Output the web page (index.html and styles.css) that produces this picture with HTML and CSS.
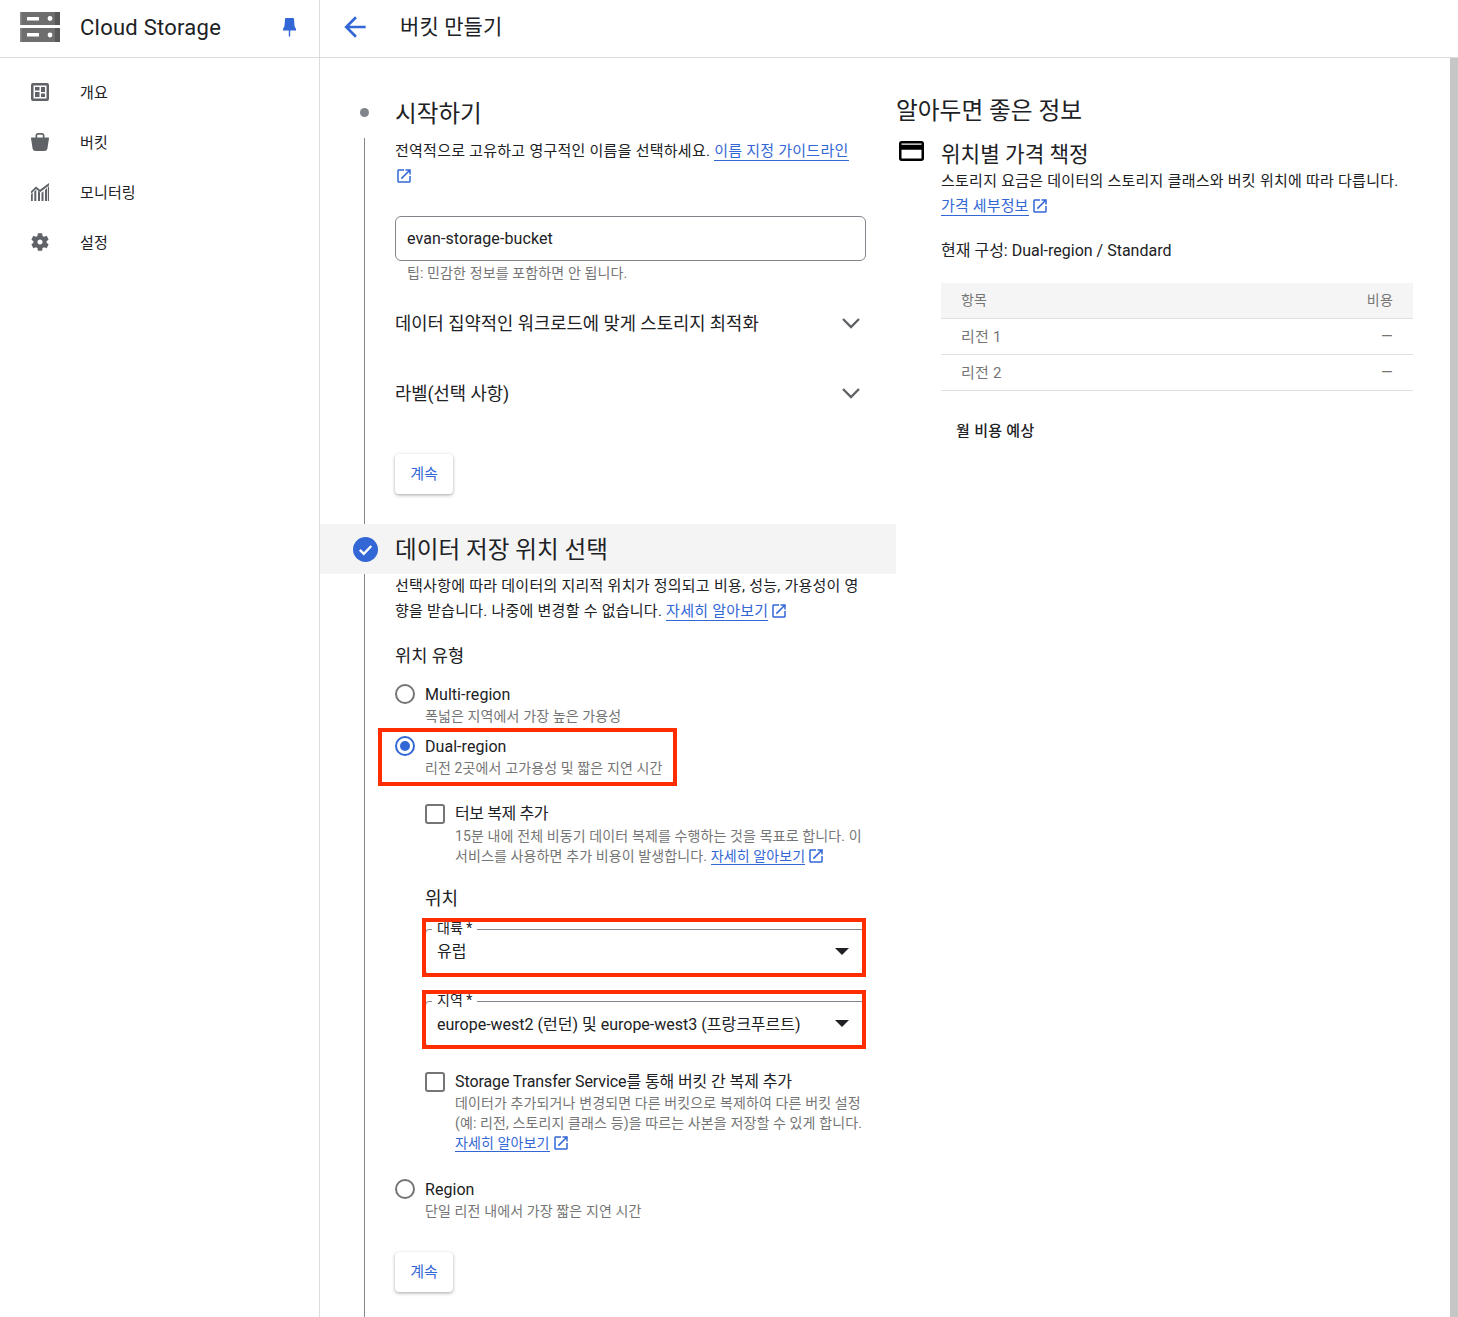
FILE: index.html
```html
<!DOCTYPE html>
<html lang="ko">
<head>
<meta charset="utf-8">
<title>버킷 만들기 - Cloud Storage</title>
<link rel="stylesheet" href="styles.css">
</head>
<body>
<div class="app">
  <header class="topbar">
    <div class="brand">
      <svg class="logo" viewBox="0 0 40 30" width="40" height="30">
        <path fill="#6e6e6e" d="M0 0h40v13H0zM0 16h40v14H0z"/>
        <path fill="#8a8a8a" d="M0 0h1.500v13H0zM0 16h1.500v14H0z"/>
        <path fill="#585858" d="M35 0h5v13h-5zM35 16h5v14h-5z"/>
        <path fill="#fff" d="M7 5h12v3.500H7zM7 21h12v3.500H7z"/>
        <circle fill="#fff" cx="30" cy="6.500" r="2.400"/>
        <circle fill="#fff" cx="30" cy="23" r="2.400"/>
      </svg>
      <span class="brand-name">Cloud Storage</span>
      <svg class="pin" viewBox="0 0 13 19" width="13" height="19"><path fill="#3367d6" d="M3 0h7q1 0 1 1l.5 7 1.500 3v1.500H7.200V18l-.7 1-.7-1v-5.500H0V11l1.500-3L2 1q0-1 1-1z"/></svg>
    </div>
    <div class="page-title">
      <svg class="back" viewBox="0 0 24 24" width="32" height="32"><path fill="#3367d6" d="M20 11H7.830l5.590-5.590L12 4l-8 8 8 8 1.410-1.410L7.830 13H20v-2z"/></svg>
      <h1>버킷 만들기</h1>
    </div>
  </header>

  <div class="content">
    <nav class="sidebar">
      <a class="nav-item">
        <svg viewBox="0 0 18 18" width="18" height="18"><path fill="#5f6368" d="M2 0h14a2 2 0 0 1 2 2v14a2 2 0 0 1-2 2H2a2 2 0 0 1-2-2V2a2 2 0 0 1 2-2z"/><path fill="#fff" d="M2.500 2.500h13v13h-13z"/><path fill="#5f6368" d="M4 4h4.500v3.500H4zM4 9h4.500v5H4zM10 4h4v5h-4zM10 10.500h4V14h-4z"/></svg>
        <span>개요</span>
      </a>
      <a class="nav-item">
        <svg viewBox="0 0 18 18" width="18" height="18"><path fill="#5f6368" fill-rule="evenodd" d="M4.500 4.500V2.500C4.500 1.100 5.600 0 7 0h4c1.400 0 2.500 1.100 2.500 2.500v2h3.800c.5 0 .8.300.7.800L16.500 15c-.2 1.700-1.300 3-3 3h-9c-1.700 0-2.800-1.300-3-3L0 5.300c-.1-.5.2-.8.700-.8zm1.700 0h5.600V2.700c0-.6-.4-1-1-1H7.200c-.6 0-1 .4-1 1z"/></svg>
        <span>버킷</span>
      </a>
      <a class="nav-item">
        <svg viewBox="0 0 18 18" width="18" height="18"><path fill="#5f6368" d="M0 11.500l1.800-1.700V18H0zM3.300 8.500l2-1.800V18h-2zM7 8l2 1.500V18H7zM10.500 9.800l2-1.600V18h-2zM14 7l2-2v13h-2zM16.800 4.300L18 3.200V18h-1.200zM0 8.300L5 3.500l4 3.200L18 0v2.500L9 9.200 5 6l-5 4.700z"/></svg>
        <span>모니터링</span>
      </a>
      <a class="nav-item">
        <svg viewBox="0 0 24 24" width="22" height="22" class="gear"><path fill="#5f6368" d="M19.140 12.940c.04-.3.060-.61.060-.94 0-.32-.02-.64-.07-.94l2.030-1.580c.18-.14.230-.41.120-.61l-1.920-3.320c-.12-.22-.37-.29-.59-.22l-2.390.96c-.5-.38-1.030-.7-1.620-.94l-.36-2.540c-.04-.24-.24-.41-.48-.41h-3.840c-.24 0-.43.170-.47.410l-.36 2.540c-.59.240-1.130.570-1.620.94l-2.390-.96c-.22-.08-.47 0-.59.220L2.740 8.870c-.12.210-.08.470.12.610l2.030 1.580c-.05.3-.09.630-.09.940s.02.640.07.940l-2.030 1.580c-.18.140-.23.410-.12.610l1.920 3.320c.12.220.37.290.59.220l2.390-.96c.5.380 1.030.7 1.620.94l.36 2.540c.05.240.24.410.48.410h3.840c.24 0 .44-.17.470-.41l.36-2.540c.59-.24 1.130-.56 1.620-.94l2.390.96c.22.080.47 0 .59-.22l1.920-3.320c.12-.22.070-.47-.12-.61l-2.010-1.580zM12 14.800c-1.540 0-2.800-1.260-2.800-2.800s1.260-2.800 2.800-2.800 2.800 1.260 2.800 2.800-1.260 2.800-2.800 2.800z"/></svg>
        <span>설정</span>
      </a>
    </nav>

    <main class="main">
      <div class="steps">
        <section class="step step-one">
          <div class="step-head">
            <span class="marker"><i class="dot"></i></span>
            <h2>시작하기</h2>
          </div>
          <div class="step-body first-body">
            <p class="para">전역적으로 고유하고 영구적인 이름을 선택하세요. <a class="link">이름 지정 가이드라인</a><br>
              <svg class="ext" viewBox="0 0 24 24"><path fill="#3367d6" d="M19 19H5V5h7V3H5c-1.110 0-2 .9-2 2v14c0 1.100.89 2 2 2h14c1.100 0 2-.9 2-2v-7h-2v7zM14 3v2h3.590l-9.830 9.830 1.410 1.410L19 6.410V10h2V3h-7z"/></svg>
            </p>
            <div class="text-input">evan-storage-bucket</div>
            <div class="hint">팁: 민감한 정보를 포함하면 안 됩니다.</div>
            <div class="expander first-exp">
              <span>데이터 집약적인 워크로드에 맞게 스토리지 최적화</span>
              <svg class="chev" viewBox="0 0 18 12" width="18" height="12"><path fill="none" stroke="#5f6368" stroke-width="2.400" d="M1 2l8 8 8-8"/></svg>
            </div>
            <div class="expander">
              <span>라벨(선택 사항)</span>
              <svg class="chev" viewBox="0 0 18 12" width="18" height="12"><path fill="none" stroke="#5f6368" stroke-width="2.400" d="M1 2l8 8 8-8"/></svg>
            </div>
            <button class="btn btn-one">계속</button>
          </div>
        </section>

        <section class="step">
          <div class="step-head active">
            <span class="marker">
              <svg viewBox="0 0 25 25" width="25" height="25"><circle cx="12.500" cy="12.500" r="12.500" fill="#3367d6"/><path fill="none" stroke="#fff" stroke-width="2.400" d="M6.800 12.800l4 4 7.500-7.800"/></svg>
            </span>
            <h2>데이터 저장 위치 선택</h2>
          </div>
          <div class="step-body second-body">
            <p class="para">선택사항에 따라 데이터의 지리적 위치가 정의되고 비용, 성능, 가용성이 영향을 받습니다. 나중에 변경할 수 없습니다. <a class="link">자세히 알아보기</a><svg class="ext" viewBox="0 0 24 24"><path fill="#3367d6" d="M19 19H5V5h7V3H5c-1.110 0-2 .9-2 2v14c0 1.100.89 2 2 2h14c1.100 0 2-.9 2-2v-7h-2v7zM14 3v2h3.590l-9.830 9.830 1.410 1.410L19 6.410V10h2V3h-7z"/></svg></p>
            <h3 class="sub-title type-title">위치 유형</h3>

            <div class="radio-row multi">
              <span class="radio"></span>
              <div>
                <div class="opt-title">Multi-region</div>
                <div class="opt-desc">폭넓은 지역에서 가장 높은 가용성</div>
              </div>
            </div>

            <div class="radio-row dual marked">
              <span class="radio on"></span>
              <div>
                <div class="opt-title">Dual-region</div>
                <div class="opt-desc">리전 2곳에서 고가용성 및 짧은 지연 시간</div>
              </div>
              <i class="red red-dual"></i>
            </div>

            <div class="nested">
              <div class="check-row turbo">
                <span class="checkbox"></span>
                <div>
                  <div class="opt-title tight">터보 복제 추가</div>
                  <div class="opt-desc lines">15분 내에 전체 비동기 데이터 복제를 수행하는 것을 목표로 합니다. 이 서비스를 사용하면 추가 비용이 발생합니다. <a class="link">자세히 알아보기</a><svg class="ext" viewBox="0 0 24 24"><path fill="#3367d6" d="M19 19H5V5h7V3H5c-1.110 0-2 .9-2 2v14c0 1.100.89 2 2 2h14c1.100 0 2-.9 2-2v-7h-2v7zM14 3v2h3.590l-9.830 9.830 1.410 1.410L19 6.410V10h2V3h-7z"/></svg></div>
                </div>
              </div>

              <h3 class="sub-title loc-title">위치</h3>

              <div class="select-wrap marked">
                <div class="select">
                  <span class="float-label">대륙 *</span>
                  <span class="select-value raised">유럽</span>
                  <i class="caret"></i>
                </div>
                <i class="red red-select"></i>
              </div>

              <div class="select-wrap second marked">
                <div class="select">
                  <span class="float-label">지역 *</span>
                  <span class="select-value">europe-west2 (런던) 및 europe-west3 (프랑크푸르트)</span>
                  <i class="caret"></i>
                </div>
                <i class="red red-select"></i>
              </div>

              <div class="check-row transfer">
                <span class="checkbox"></span>
                <div>
                  <div class="opt-title tight-small">Storage Transfer Service를 통해 버킷 간 복제 추가</div>
                  <div class="opt-desc lines">데이터가 추가되거나 변경되면 다른 버킷으로 복제하여 다른 버킷 설정(예: 리전, 스토리지 클래스 등)을 따르는 사본을 저장할 수 있게 합니다.<br><a class="link">자세히 알아보기</a><svg class="ext" viewBox="0 0 24 24"><path fill="#3367d6" d="M19 19H5V5h7V3H5c-1.110 0-2 .9-2 2v14c0 1.100.89 2 2 2h14c1.100 0 2-.9 2-2v-7h-2v7zM14 3v2h3.590l-9.830 9.830 1.410 1.410L19 6.410V10h2V3h-7z"/></svg></div>
                </div>
              </div>
            </div>

            <div class="radio-row region">
              <span class="radio"></span>
              <div>
                <div class="opt-title">Region</div>
                <div class="opt-desc">단일 리전 내에서 가장 짧은 지연 시간</div>
              </div>
            </div>

            <button class="btn btn-two">계속</button>
          </div>
        </section>
      </div>

      <aside class="info">
        <h2 class="info-title">알아두면 좋은 정보</h2>
        <div class="info-head">
          <svg viewBox="2 4 20 16" width="25" height="20"><path fill="#000" fill-rule="evenodd" d="M20 4H4c-1.110 0-1.990.89-1.990 2L2 18c0 1.110.89 2 2 2h16c1.110 0 2-.89 2-2V6c0-1.110-.89-2-2-2zm0 14H4v-7h16v7zm0-11H4V6h16v1z"/></svg>
          <h3>위치별 가격 책정</h3>
        </div>
        <div class="info-body">
          <p class="info-desc">스토리지 요금은 데이터의 스토리지 클래스와 버킷 위치에 따라 다릅니다.</p>
          <p class="info-link"><a class="link">가격 세부정보</a><svg class="ext" viewBox="0 0 24 24"><path fill="#3367d6" d="M19 19H5V5h7V3H5c-1.110 0-2 .9-2 2v14c0 1.100.89 2 2 2h14c1.100 0 2-.9 2-2v-7h-2v7zM14 3v2h3.590l-9.830 9.830 1.410 1.410L19 6.410V10h2V3h-7z"/></svg></p>
          <p class="config">현재 구성: Dual-region / Standard</p>
          <div class="table">
            <div class="row header"><span>항목</span><span>비용</span></div>
            <div class="row"><span>리전 1</span><span>—</span></div>
            <div class="row"><span>리전 2</span><span>—</span></div>
          </div>
          <p class="estimate">월 비용 예상</p>
        </div>
      </aside>
      <div class="scrollbar"></div>
    </main>
  </div>
</div>
</body>
</html>
```

FILE: styles.css
```css
* { box-sizing: border-box; }
html, body { margin: 0; padding: 0; height: 100%; }
body {
  font-family: Roboto, "Noto Sans CJK KR", sans-serif;
  color: #202124;
  background: #fff;
  overflow: hidden;
  font-size: 15px;
}
h1, h2, h3, p { margin: 0; font-weight: 400; }
.app { width: 1458px; height: 1317px; display: flex; flex-direction: column; overflow: hidden; }

.topbar { height: 58px; display: flex; border-bottom: 1px solid #dadce0; flex: none; }
.brand { width: 320px; border-right: 1px solid #dadce0; display: flex; align-items: center; padding: 0 23px 3px 20px; }
.logo { flex: none; }
.brand-name { margin-left: 20px; font-size: 22px; color: #202124; flex: 1; letter-spacing: .25px; }
.pin { flex: none; }
.page-title { display: flex; align-items: center; padding: 0 0 4px 19px; }
.page-title h1 { font-size: 21px; margin: -3px 0 0 29px; color: #202124; letter-spacing: .1px; }

.content { flex: 1; display: flex; min-height: 0; }
.sidebar { width: 320px; border-right: 1px solid #dadce0; padding-top: 9px; flex: none; }
.nav-item { height: 50px; display: flex; align-items: center; padding-left: 31px; font-size: 15px; letter-spacing: .15px; }
.nav-item svg { flex: none; margin-right: 31px; }
.nav-item svg.gear { margin: 0 29px 0 -2px; }
.nav-item span { color: #202124; margin-top: -2px; }

.main { flex: 1; display: flex; position: relative; min-width: 0; }
.steps { width: 576px; flex: none; padding-top: 30px; }
.step-head { display: flex; align-items: center; height: 50px; }
.marker { width: 30px; margin-left: 30px; margin-right: 15px; display: flex; justify-content: center; flex: none; }
.dot { width: 9px; height: 9px; border-radius: 50%; background: #80868b; display: block; margin: -1px 1px 0 0; }
.step-head h2 { font-size: 23.600px; color: #202124; line-height: 30px; padding-top: 2px; }
.step-head.active { background: #f4f4f4; }
.step-body { margin-left: 44px; border-left: 1px solid #80868b; padding-left: 30px; }
.first-body { height: 386px; padding-top: 1px; }
.para { font-size: 15px; line-height: 25px; width: 470px; letter-spacing: .25px; }
.link { color: #3367d6; border-bottom: 1px solid #3367d6; }
.ext { width: 18px; height: 18px; vertical-align: -4px; margin-left: 2px; }
.para > .ext:first-of-type { margin-left: 0; }
.second-body .para .ext { margin-left: 2px; }
.text-input {
  margin-top: 27px; width: 471px; height: 45px; border: 1px solid #80868b; border-radius: 6px;
  padding: 0 11px; display: flex; align-items: center; font-size: 16px; color: #202124; letter-spacing: .1px;
}
.hint { font-size: 14px; color: #757575; line-height: 20px; padding-left: 12px; margin-top: 2px; letter-spacing: .12px; }
.expander { width: 471px; height: 70px; display: flex; align-items: center; justify-content: space-between; font-size: 17.700px; padding-right: 6px; }
.expander span { margin-top: -2px; }
.first-exp { margin-top: 5px; }
.btn {
  display: block; width: 58px; height: 40px; background: #fff; border: 0; border-radius: 4px;
  color: #3367d6; font: inherit; font-size: 15px; box-shadow: 0 1px 3px rgba(60,64,67,.35), 0 2px 4px rgba(60,64,67,.12); padding: 0 0 4px;
}
.btn-one { margin-top: 26px; }

.second-body { height: 900px; }
.sub-title { font-size: 17.600px; line-height: 24px; color: #202124; }
.type-title { margin-top: 20px; }
.radio-row { display: flex; gap: 10px; position: relative; }
.radio { flex: none; width: 20px; height: 20px; border-radius: 50%; border: 2px solid #757575; margin-top: 9px; background: #fff; position: relative; }
.radio.on { border-color: #3367d6; }
.radio.on::after { content: ""; position: absolute; inset: 3px; border-radius: 50%; background: #3367d6; }
.opt-title { font-size: 16px; line-height: 23px; margin-top: 8px; color: #202124; letter-spacing: .05px; }
.opt-title.tight { letter-spacing: -.4px; line-height: 24px; }
.opt-title.tight-small { letter-spacing: -.1px; }
.opt-desc { font-size: 14px; line-height: 20px; color: #757575; letter-spacing: .12px; }
.multi { margin-top: 7px; }
.dual { margin-top: 1px; }
.red { position: absolute; border: 4px solid #ff2d00; pointer-events: none; display: block; }
.red-dual { left: -17px; top: 1px; width: 299px; height: 58px; }

.nested { padding-left: 30px; }
.check-row { display: flex; gap: 10px; }
.checkbox { flex: none; width: 20px; height: 20px; border: 2px solid #757575; border-radius: 3px; margin-top: 10px; }
.lines { width: 412px; }
.turbo { margin-top: 16px; }
.loc-title { margin-top: 21px; font-size: 18px; }
.select-wrap { position: relative; height: 51px; margin-top: 18px; width: 440px; }
.select-wrap.second { margin-top: 21px; }
.select { height: 46px; margin-top: 3px; border: 1px solid #80868b; border-radius: 4px; position: relative; display: flex; align-items: center; padding: 0 15px 2px 11px; justify-content: space-between; }
.float-label { position: absolute; left: 6px; top: -10px; background: #fff; padding: 0 5px 0 5px; font-size: 14px; line-height: 16px; color: #202124; }
.select-value { font-size: 16px; }
.select-value.raised { margin-top: -2px; }
.caret { width: 0; height: 0; border-left: 7px solid transparent; border-right: 7px solid transparent; border-top: 7px solid #202124; }
.red-select { left: -3px; top: -11px; width: 444px; height: 59px; }
.transfer { margin-top: 10px; }
.region { margin-top: 17px; }
.btn-two { margin-top: 31px; }

.info { flex: 1; min-width: 0; padding-top: 37px; }
.info-title { font-size: 23.700px; line-height: 32px; color: #202124; }
.info-head { display: flex; align-items: center; margin-top: 9px; height: 32px; gap: 17px; margin-left: 3px; }
.info-head svg { margin-top: -3px; }
.info-head h3 { font-size: 21.300px; color: #202124; }
.info-body { margin-left: 45px; width: 472px; }
.info-desc { font-size: 15px; line-height: 24px; margin-top: 1px; white-space: nowrap; letter-spacing: .25px; }
.info-link { font-size: 15px; line-height: 24px; margin-top: 1px; letter-spacing: .15px; }
.config { font-size: 16px; line-height: 24px; margin-top: 21px; }
.table { margin-top: 20px; }
.row { height: 36px; display: flex; align-items: center; justify-content: space-between; padding: 0 20px 2px; border-bottom: 1px solid #e0e0e0; font-size: 15px; color: #757575; letter-spacing: .2px; }
.row.header { background: #f5f5f5; font-size: 14px; padding-bottom: 3px; }
.estimate { font-size: 15px; font-weight: 500; line-height: 24px; margin: 28px 0 0 15px; letter-spacing: .3px; }
.scrollbar { position: absolute; right: 0; top: 0; bottom: 0; width: 8px; background: #c6c6c6; }
```
